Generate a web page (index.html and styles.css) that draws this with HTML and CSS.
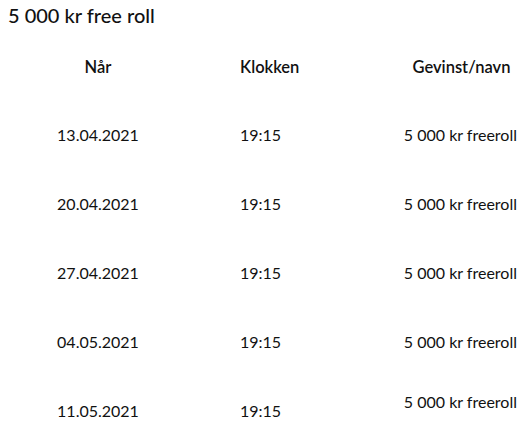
FILE: index.html
```html
<!DOCTYPE html>
<html lang="no">
<head>
<meta charset="utf-8">
<link rel="stylesheet" href="styles.css">
</head>
<body>
<div class="page">
  <h2 class="title">5 000 kr free roll</h2>
  <div class="table">
    <div class="row head">
      <div class="c1">Når</div>
      <div class="c2">Klokken</div>
      <div class="c3">Gevinst/navn</div>
    </div>
    <div class="row">
      <div class="c1">13.04.2021</div>
      <div class="c2">19:15</div>
      <div class="c3">5 000 kr freeroll</div>
    </div>
    <div class="row">
      <div class="c1">20.04.2021</div>
      <div class="c2">19:15</div>
      <div class="c3">5 000 kr freeroll</div>
    </div>
    <div class="row">
      <div class="c1">27.04.2021</div>
      <div class="c2">19:15</div>
      <div class="c3">5 000 kr freeroll</div>
    </div>
    <div class="row">
      <div class="c1">04.05.2021</div>
      <div class="c2">19:15</div>
      <div class="c3">5 000 kr freeroll</div>
    </div>
    <div class="row last">
      <div class="c1">11.05.2021</div>
      <div class="c2">19:15</div>
      <div class="c3">5 000 kr freeroll</div>
    </div>
  </div>
</div>
</body>
</html>
```
FILE: styles.css
```css
html, body {
  margin: 0;
  padding: 0;
  background: #fff;
}
body {
  font-family: "Lato", "Noto Sans", sans-serif;
  color: #111;
}
.page {
  padding: 3px 8px 0 8px;
}
.title {
  margin: 0;
  font-size: 20px;
  font-weight: 500;
  line-height: 24px;
}
.table {
  margin-top: 6px;
}
.row {
  display: grid;
  grid-template-columns: 180px 212px 1fr;
  align-items: center;
  height: 69px;
  font-size: 16px;
}
.head {
  height: 67px;
  font-weight: 600;
  font-size: 16.5px;
}
.c1 {
  text-align: center;
}
.c2 {
  padding-left: 52px;
}
.c3 {
  text-align: right;
}
.head .c3 {
  text-align: center;
  padding-left: 6px;
}
.last .c3 {
  align-self: start;
  padding-top: 16px;
}
```
